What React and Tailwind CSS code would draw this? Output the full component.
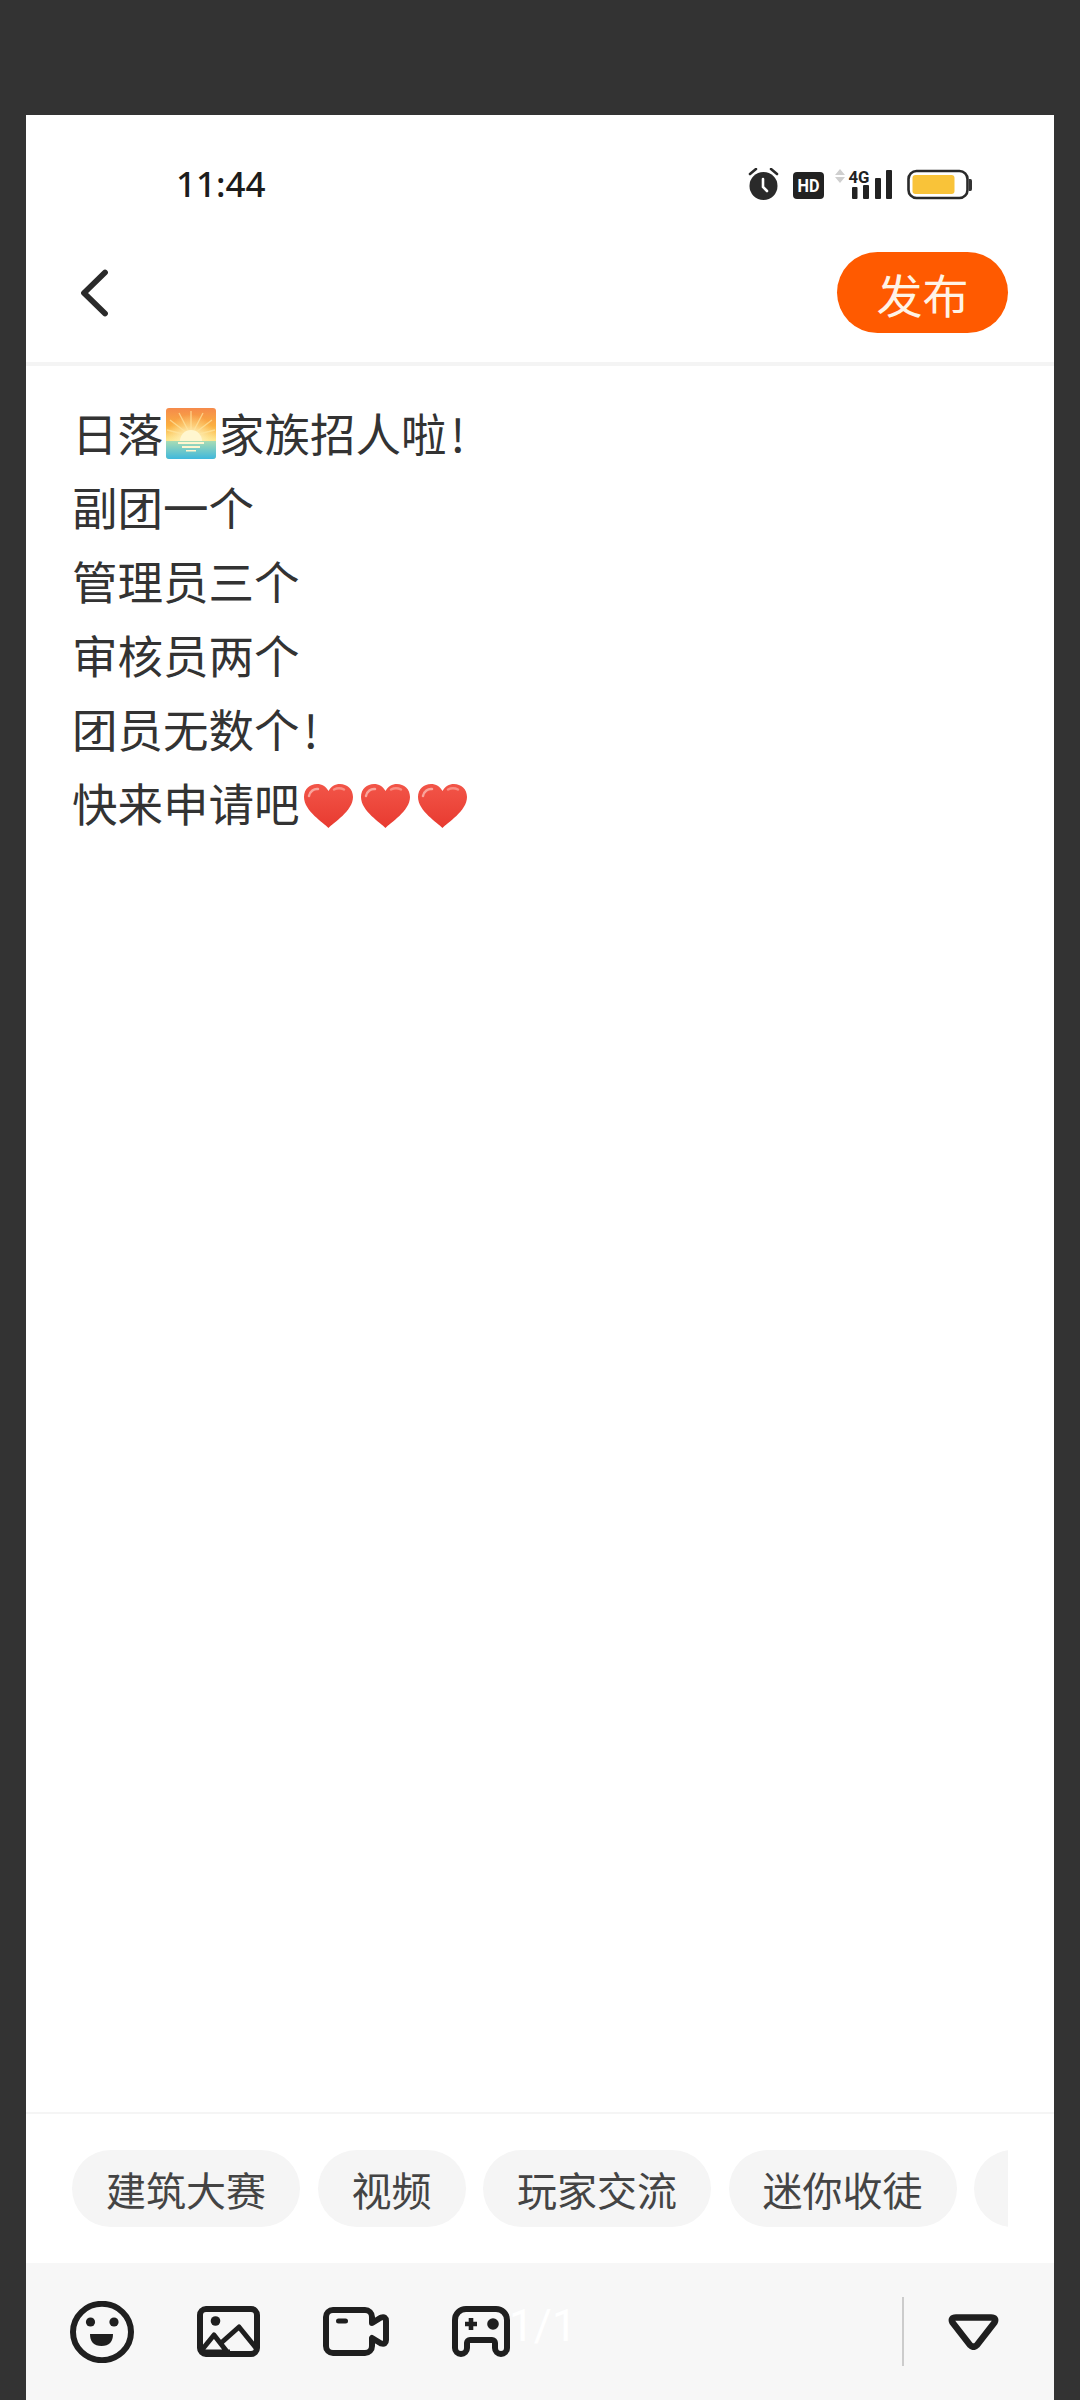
import React from "react";

const cjk = { fontFamily: '"Noto Sans CJK SC", "Noto Sans", sans-serif' };

function Sunrise() {
  return (
    <svg width="50" height="51" viewBox="0 0 50 51" className="inline-block align-[-7px] mx-[3px]">
      <defs>
        <linearGradient id="sky" x1="0" y1="0" x2="0" y2="1">
          <stop offset="0" stopColor="#f58a4b" />
          <stop offset="0.35" stopColor="#fbb040" />
          <stop offset="0.62" stopColor="#fde48a" />
        </linearGradient>
        <linearGradient id="sea" x1="0" y1="0" x2="0" y2="1">
          <stop offset="0" stopColor="#a8dcb4" />
          <stop offset="1" stopColor="#3fb8dc" />
        </linearGradient>
        <radialGradient id="glow" cx="0.5" cy="0.62" r="0.5">
          <stop offset="0" stopColor="#fff8d8" stopOpacity="1" />
          <stop offset="1" stopColor="#fff0b0" stopOpacity="0" />
        </radialGradient>
      </defs>
      <rect width="50" height="51" rx="3" fill="url(#sky)" />
      <rect width="50" height="51" rx="3" fill="url(#glow)" />
      <g stroke="#ffe6a0" strokeWidth="1.4" opacity="0.7">
        <path d="M25 28V3M25 28L13 5M25 28L37 5M25 28L4 12M25 28L46 12M25 28L1 22M25 28L49 22" />
      </g>
      <path d="M0 33V48a3 3 0 0 0 3 3H47a3 3 0 0 0 3-3V33Z" fill="url(#sea)" />
      <path d="M14 33a11 11 0 0 1 22 0Z" fill="#fff6cf" />
      <g fill="#fff6cf">
        <rect x="12" y="34" width="26" height="2" />
        <rect x="16" y="38" width="18" height="2" />
        <rect x="20" y="42" width="10" height="1.5" />
      </g>
    </svg>
  );
}

function Heart() {
  return (
    <svg width="51" height="46" viewBox="0 0 51 46" className="inline-block align-[-7px] mx-[3px]">
      <defs>
        <linearGradient id="heartFill" x1="0" y1="0" x2="0" y2="1">
          <stop offset="0" stopColor="#f25548" />
          <stop offset="1" stopColor="#e83a30" />
        </linearGradient>
      </defs>
      <path
        d="M25.5 45C21 40 1 28 1 14C1 6 7 1 14 1C19 1 23 3.5 25.5 8C28 3.5 32 1 37 1C44 1 50 6 50 14C50 28 30 40 25.5 45Z"
        fill="url(#heartFill)"
      />
      <path d="M6 13C7 8 11 5.5 15 6" stroke="#f9a49b" strokeWidth="2.5" fill="none" strokeLinecap="round" />
      <path d="M31 6.5C34 5 38 5 41 6.5" stroke="#f98d82" strokeWidth="2.5" fill="none" strokeLinecap="round" />
    </svg>
  );
}

function StatusIcons() {
  return (
    <svg width="226" height="34" viewBox="748 167 226 34" className="mt-[2px]">
      {/* alarm */}
      <circle cx="764.5" cy="185" r="14" fill="#2a2a2a" />
      <path d="M751 173L757 168M778 173L772 168" stroke="#2a2a2a" strokeWidth="2.6" strokeLinecap="round" />
      <path d="M764 178V186L768 190" stroke="#fff" strokeWidth="2.6" fill="none" strokeLinecap="round" />
      {/* HD */}
      <rect x="794" y="171" width="31" height="27" rx="4" fill="#222" />
      <text x="809.5" y="191" fontSize="18" fontWeight="700" fill="#fff" textAnchor="middle" fontFamily="Roboto, sans-serif" textLength="22" lengthAdjust="spacingAndGlyphs">HD</text>
      {/* arrows */}
      <path d="M836 174L841 168L846 174Z M836 176L841 182L846 176Z" fill="#cfcfcf" />
      {/* 4G */}
      <text x="860" y="182" fontSize="17" fontWeight="700" fill="#222" textAnchor="middle" fontFamily="Roboto, sans-serif" textLength="21" lengthAdjust="spacingAndGlyphs">4G</text>
      {/* bars */}
      <rect x="853" y="186" width="5.5" height="12" rx="1" fill="#222" />
      <rect x="864" y="184" width="6" height="14" rx="1" fill="#222" />
      <rect x="876" y="177" width="6" height="21" rx="1" fill="#222" />
      <rect x="887" y="169" width="6" height="29" rx="1" fill="#222" />
      {/* battery */}
      <rect x="909.5" y="170" width="59" height="27" rx="8" fill="#fff" stroke="#2a2a2a" strokeWidth="2.6" />
      <rect x="913.5" y="174" width="42" height="19" rx="3" fill="#f9c339" />
      <path d="M970 178H971.5Q973 178 973 180V188Q973 190 971.5 190H970Z" fill="#333" />
    </svg>
  );
}

function Back() {
  return (
    <svg width="28" height="48" viewBox="0 0 28 48" className="ml-[54px]">
      <path d="M25 3.5L4 24L25 44.5" stroke="#2a2a2a" strokeWidth="5.8" fill="none" strokeLinecap="round" strokeLinejoin="round" />
    </svg>
  );
}

function Smile() {
  return (
    <svg width="64" height="62" viewBox="0 0 64 62" className="shrink-0">
      <ellipse cx="32" cy="31" rx="29" ry="28.2" fill="none" stroke="#1f1f1f" strokeWidth="6" />
      <circle cx="20.5" cy="21" r="4.6" fill="#1f1f1f" />
      <circle cx="44" cy="21" r="4.6" fill="#1f1f1f" />
      <path d="M20 33H43Q43 45 31.5 45Q20 45 20 33Z" fill="#1f1f1f" />
    </svg>
  );
}

function ImageIcon() {
  return (
    <svg width="63" height="51" viewBox="0 0 63 51" className="shrink-0">
      <rect x="3" y="3" width="57" height="45" rx="6" fill="none" stroke="#1f1f1f" strokeWidth="6" />
      <circle cx="18.5" cy="15" r="4.8" fill="#1f1f1f" />
      <path d="M4 45L17 29L31 47M24 37L42 21L59 42M4 46H33" fill="none" stroke="#1f1f1f" strokeWidth="5" strokeLinejoin="round" />
    </svg>
  );
}

function VideoIcon() {
  return (
    <svg width="66" height="49" viewBox="0 0 66 49" className="shrink-0">
      <path
        d="M10 3H42A7 7 0 0 1 49 10V16L58 10.5Q63 9 63 14V33Q63 38 58 36.5L49 31V39A7 7 0 0 1 42 46H10A7 7 0 0 1 3 39V10A7 7 0 0 1 10 3Z"
        fill="none"
        stroke="#1f1f1f"
        strokeWidth="6"
        strokeLinejoin="round"
      />
      <rect x="13" y="11.5" width="12" height="5" rx="2.5" fill="#1f1f1f" />
    </svg>
  );
}

function GameIcon() {
  return (
    <svg width="58" height="51" viewBox="0 0 58 51" className="shrink-0">
      <path
        d="M3 14A11 11 0 0 1 14 3H44A11 11 0 0 1 55 14V42A6 6 0 0 1 43 42V37A3 3 0 0 0 40 34H18A3 3 0 0 0 15 37V42A6 6 0 0 1 3 42Z"
        fill="none"
        stroke="#1f1f1f"
        strokeWidth="6"
        strokeLinejoin="round"
      />
      <path d="M13 18H25M19 12V24" stroke="#1f1f1f" strokeWidth="4.6" />
      <circle cx="41" cy="18" r="5.8" fill="#1f1f1f" />
    </svg>
  );
}

function Triangle() {
  return (
    <svg width="51" height="36" viewBox="0 0 51 36" className="shrink-0">
      <path
        d="M8 3.5H43Q49 3.5 46.5 8.5L29 31Q25.5 34.5 22 31L4.5 8.5Q2 3.5 8 3.5Z"
        fill="none"
        stroke="#1f1f1f"
        strokeWidth="6.4"
        strokeLinejoin="round"
      />
    </svg>
  );
}

const chips = ["建筑大赛", "视频", "玩家交流", "迷你收徒"];

export default function App() {
  return (
    <div className="min-h-[2400px] w-[1080px] bg-[#333333] pt-[115px] pl-[26px] pr-[26px]" style={cjk}>
      <div className="flex h-[2285px] flex-col bg-white">
        <div className="flex h-[137px] items-center justify-between pl-[150px] pr-[81px]">
          <span className="text-[35px] font-medium leading-none text-[#1c1c1c]" style={{ fontFamily: '"Noto Sans", sans-serif' }}>11:44</span>
          <StatusIcons />
        </div>
        <div className="flex h-[110px] items-center justify-between pb-[29px] pr-[46px]">
          <Back />
          <button className="flex h-[81px] w-[171px] items-center justify-center rounded-full bg-[#ff5a00] text-[46px] leading-none text-[#fff3e6]">
            发布
          </button>
        </div>
        <div className="h-[4px] bg-[#f4f4f4]" />
        <div className="flex-1 pt-[29px] pl-[46px] text-[45.5px] leading-[74px] text-[#333333]">
          <div className="whitespace-nowrap">日落<Sunrise />家族招人啦<span className="ml-[4px]">!</span></div>
          <div>副团一个</div>
          <div>管理员三个</div>
          <div>审核员两个</div>
          <div>团员无数个<span className="ml-[4px]">!</span></div>
          <div className="whitespace-nowrap">快来申请吧<Heart /><Heart /><Heart /></div>
        </div>
        <div className="border-t-2 border-[#f5f5f5] pt-[36px] pb-[36px]">
          <div className="ml-[46px] mr-[46px] flex gap-[17.5px] overflow-hidden">
            {chips.map((c) => (
              <div key={c} className="flex h-[77px] shrink-0 items-center rounded-full bg-[#f5f5f5] px-[34px] text-[40px] leading-none text-[#444444]">
                {c}
              </div>
            ))}
            <div className="h-[77px] w-[150px] shrink-0 rounded-full bg-[#f5f5f5]" />
          </div>
        </div>
        <div className="relative flex h-[137px] items-center gap-[63px] bg-[#f7f7f7] pl-[44px] pr-[55px]">
          <Smile />
          <ImageIcon />
          <VideoIcon />
          <GameIcon />
          <span className="absolute left-[483px] top-[33px] text-[44px] leading-[60px] text-white" style={{ fontFamily: 'Roboto, sans-serif' }}>1/1</span>
          <div className="ml-auto flex items-center gap-[44px]">
            <div className="h-[69px] w-[2px] bg-[#cccccc]" />
            <Triangle />
          </div>
        </div>
      </div>
    </div>
  );
}
